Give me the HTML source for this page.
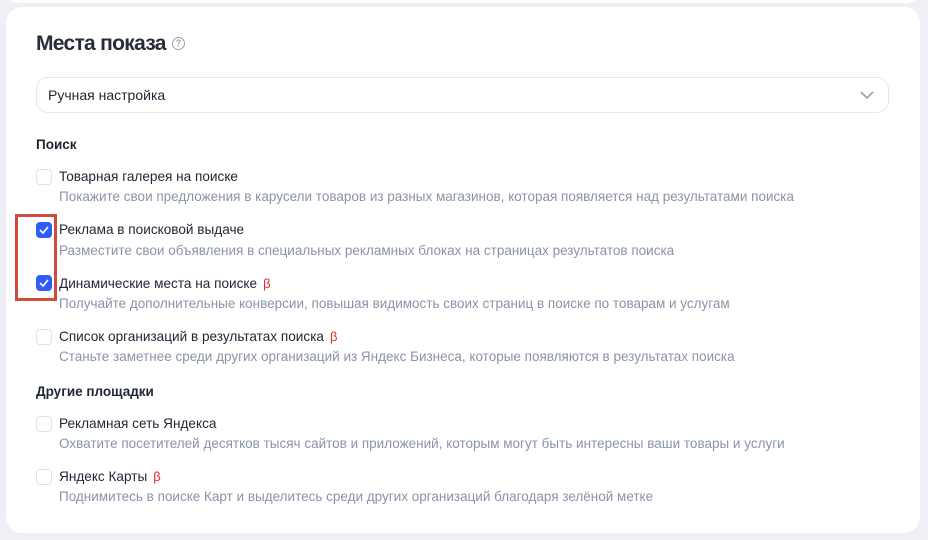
<!DOCTYPE html>
<html><head><meta charset="utf-8"><style>
*{margin:0;padding:0;box-sizing:border-box}
body{width:928px;height:540px;background:#eef0f5;font-family:"Liberation Sans",sans-serif;position:relative;overflow:hidden}
.card{position:absolute;left:6px;top:7px;width:914px;height:526px;background:#fff;border-radius:16px}
.top{position:absolute;left:6px;top:-20px;width:914px;height:23px;background:#fff;border-radius:16px}
h1{position:absolute;left:36px;top:32px;font-size:21px;font-weight:600;color:#262c3a;letter-spacing:-0.7px}
.help{position:absolute;left:172px;top:37px;width:13px;height:13px;border:1.3px solid #9aa1b0;border-radius:50%;font-size:9px;color:#9aa1b0;text-align:center;line-height:11px;font-weight:bold}
.sel{position:absolute;left:36px;top:77px;width:853px;height:36px;border:1px solid #e6e8ef;border-radius:12px;font-size:14px;color:#1e2533;padding-left:11px;line-height:35px}
.sel svg{position:absolute;right:14px;top:13px}
.sec{position:absolute;left:36px;font-size:13.5px;font-weight:bold;color:#1e2533}
.cb{position:absolute;left:36px;width:16px;height:16px;border:1px solid #dfe2ea;border-radius:4px;background:#fff}
.cb.on{background:#2f5df5;border-color:#2f5df5}
.cb.on svg{position:absolute;left:2px;top:3px}
.lab{position:absolute;left:59px;font-size:13.6px;color:#1e2533;white-space:nowrap}
.desc{position:absolute;left:59px;font-size:13.5px;color:#8a93a8;white-space:nowrap}
.b{color:#e8262c;margin-left:6px;font-size:13px}
.red{position:absolute;left:15px;top:214px;width:42px;height:87px;border:3px solid #d24a3c}
</style></head><body>
<div class="top"></div>
<div class="card"></div>
<h1>Места показа</h1>
<div class="help">?</div>
<div class="sel">Ручная настройка<svg width="14" height="8" viewBox="0 0 14 8"><path d="M1 1l6 6 6-6" fill="none" stroke="#9aa1b0" stroke-width="1.6"/></svg></div>
<div class="sec" style="top:137px">Поиск</div>

<div class="cb" style="top:169px"></div>
<div class="lab" style="top:169px">Товарная галерея на поиске</div>
<div class="desc" style="top:189px">Покажите свои предложения в карусели товаров из разных магазинов, которая появляется над результатами поиска</div>

<div class="cb on" style="top:222px"><svg width="10" height="8" viewBox="0 0 10 8"><path d="M1 4l3 3 5-6" fill="none" stroke="#fff" stroke-width="1.6"/></svg></div>
<div class="lab" style="top:222px">Реклама в поисковой выдаче</div>
<div class="desc" style="top:243px">Разместите свои объявления в специальных рекламных блоках на страницах результатов поиска</div>

<div class="cb on" style="top:275px"><svg width="10" height="8" viewBox="0 0 10 8"><path d="M1 4l3 3 5-6" fill="none" stroke="#fff" stroke-width="1.6"/></svg></div>
<div class="lab" style="top:276px">Динамические места на поиске<span class="b">β</span></div>
<div class="desc" style="top:296px">Получайте дополнительные конверсии, повышая видимость своих страниц в поиске по товарам и услугам</div>

<div class="cb" style="top:329px"></div>
<div class="lab" style="top:329px">Список организаций в результатах поиска<span class="b">β</span></div>
<div class="desc" style="top:349px">Станьте заметнее среди других организаций из Яндекс Бизнеса, которые появляются в результатах поиска</div>

<div class="sec" style="top:384px">Другие площадки</div>

<div class="cb" style="top:416px"></div>
<div class="lab" style="top:416px">Рекламная сеть Яндекса</div>
<div class="desc" style="top:436px">Охватите посетителей десятков тысяч сайтов и приложений, которым могут быть интересны ваши товары и услуги</div>

<div class="cb" style="top:469px"></div>
<div class="lab" style="top:469px">Яндекс Карты<span class="b">β</span></div>
<div class="desc" style="top:489px">Поднимитесь в поиске Карт и выделитесь среди других организаций благодаря зелёной метке</div>

<div class="red"></div>
</body></html>
